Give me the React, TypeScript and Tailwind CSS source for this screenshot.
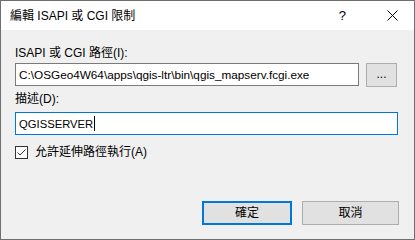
import React from "react";

const FONT = {
  fontFamily: '"Segoe UI", "Liberation Sans", "Noto Sans CJK TC", sans-serif',
};

export default function App() {
  return (
    <div
      className="flex h-[240px] w-[415px] flex-col border border-[#6f6f6f] bg-[#f0f0f0] text-[12px] leading-[16px] text-black"
      style={FONT}
    >
      <TitleBar />
      <div className="flex flex-1 flex-col pl-[14px] pr-[15px] pb-[14px]">
        <div className="mt-[15px]">ISAPI 或 CGI 路徑(I):</div>
        <div className="mt-[2px] flex items-start">
          <div className="flex h-[23px] w-[344px] items-center border border-[#7a7a7a] bg-white pl-[3px] text-[11.75px]">
            C:\OSGeo4W64\apps\qgis-ltr\bin\qgis_mapserv.fcgi.exe
          </div>
          <button className="ml-[7px] flex h-[24px] w-[31px] items-center justify-center border border-[#adadad] bg-[#e1e1e1] pb-[2px]">
            ...
          </button>
        </div>
        <div className="mt-[4px]">描述(D):</div>
        <div className="mt-[5px] flex h-[23px] w-[383px] items-center border border-[#0078d7] bg-white pl-[3px] text-[11.25px]">
          QGISSERVER
          <span className="ml-[1px] inline-block h-[15px] w-px bg-black" />
        </div>
        <label className="mt-[9px] flex items-center gap-[7px]">
          <span className="flex h-[13px] w-[13px] items-center justify-center border border-[#333333] bg-white">
            <svg width="11" height="11" viewBox="0 0 11 11">
              <path
                d="M1.5 5.5 L4 8 L9.5 2.5"
                fill="none"
                stroke="#333333"
                strokeWidth="1"
              />
            </svg>
          </span>
          允許延伸路徑執行(A)
        </label>
        <div className="mt-auto flex justify-end gap-[10px]">
          <button className="flex h-[24px] w-[90px] items-center justify-center border-2 border-[#0078d7] bg-[#e1e1e1]">
            確定
          </button>
          <button className="flex h-[24px] w-[97px] items-center justify-center border border-[#adadad] bg-[#e1e1e1]">
            取消
          </button>
        </div>
      </div>
    </div>
  );
}

function TitleBar() {
  return (
    <div className="flex h-[29px] items-center bg-white pl-[9px]">
      <span className="flex-1">編輯 ISAPI 或 CGI 限制</span>
      <span className="mr-[41px] text-[13px]">?</span>
      <svg className="mr-[16px]" width="11" height="11" viewBox="0 0 11 11">
        <path d="M0.5 0.5 L10.5 10.5 M10.5 0.5 L0.5 10.5" stroke="#000" strokeWidth="1" />
      </svg>
    </div>
  );
}
